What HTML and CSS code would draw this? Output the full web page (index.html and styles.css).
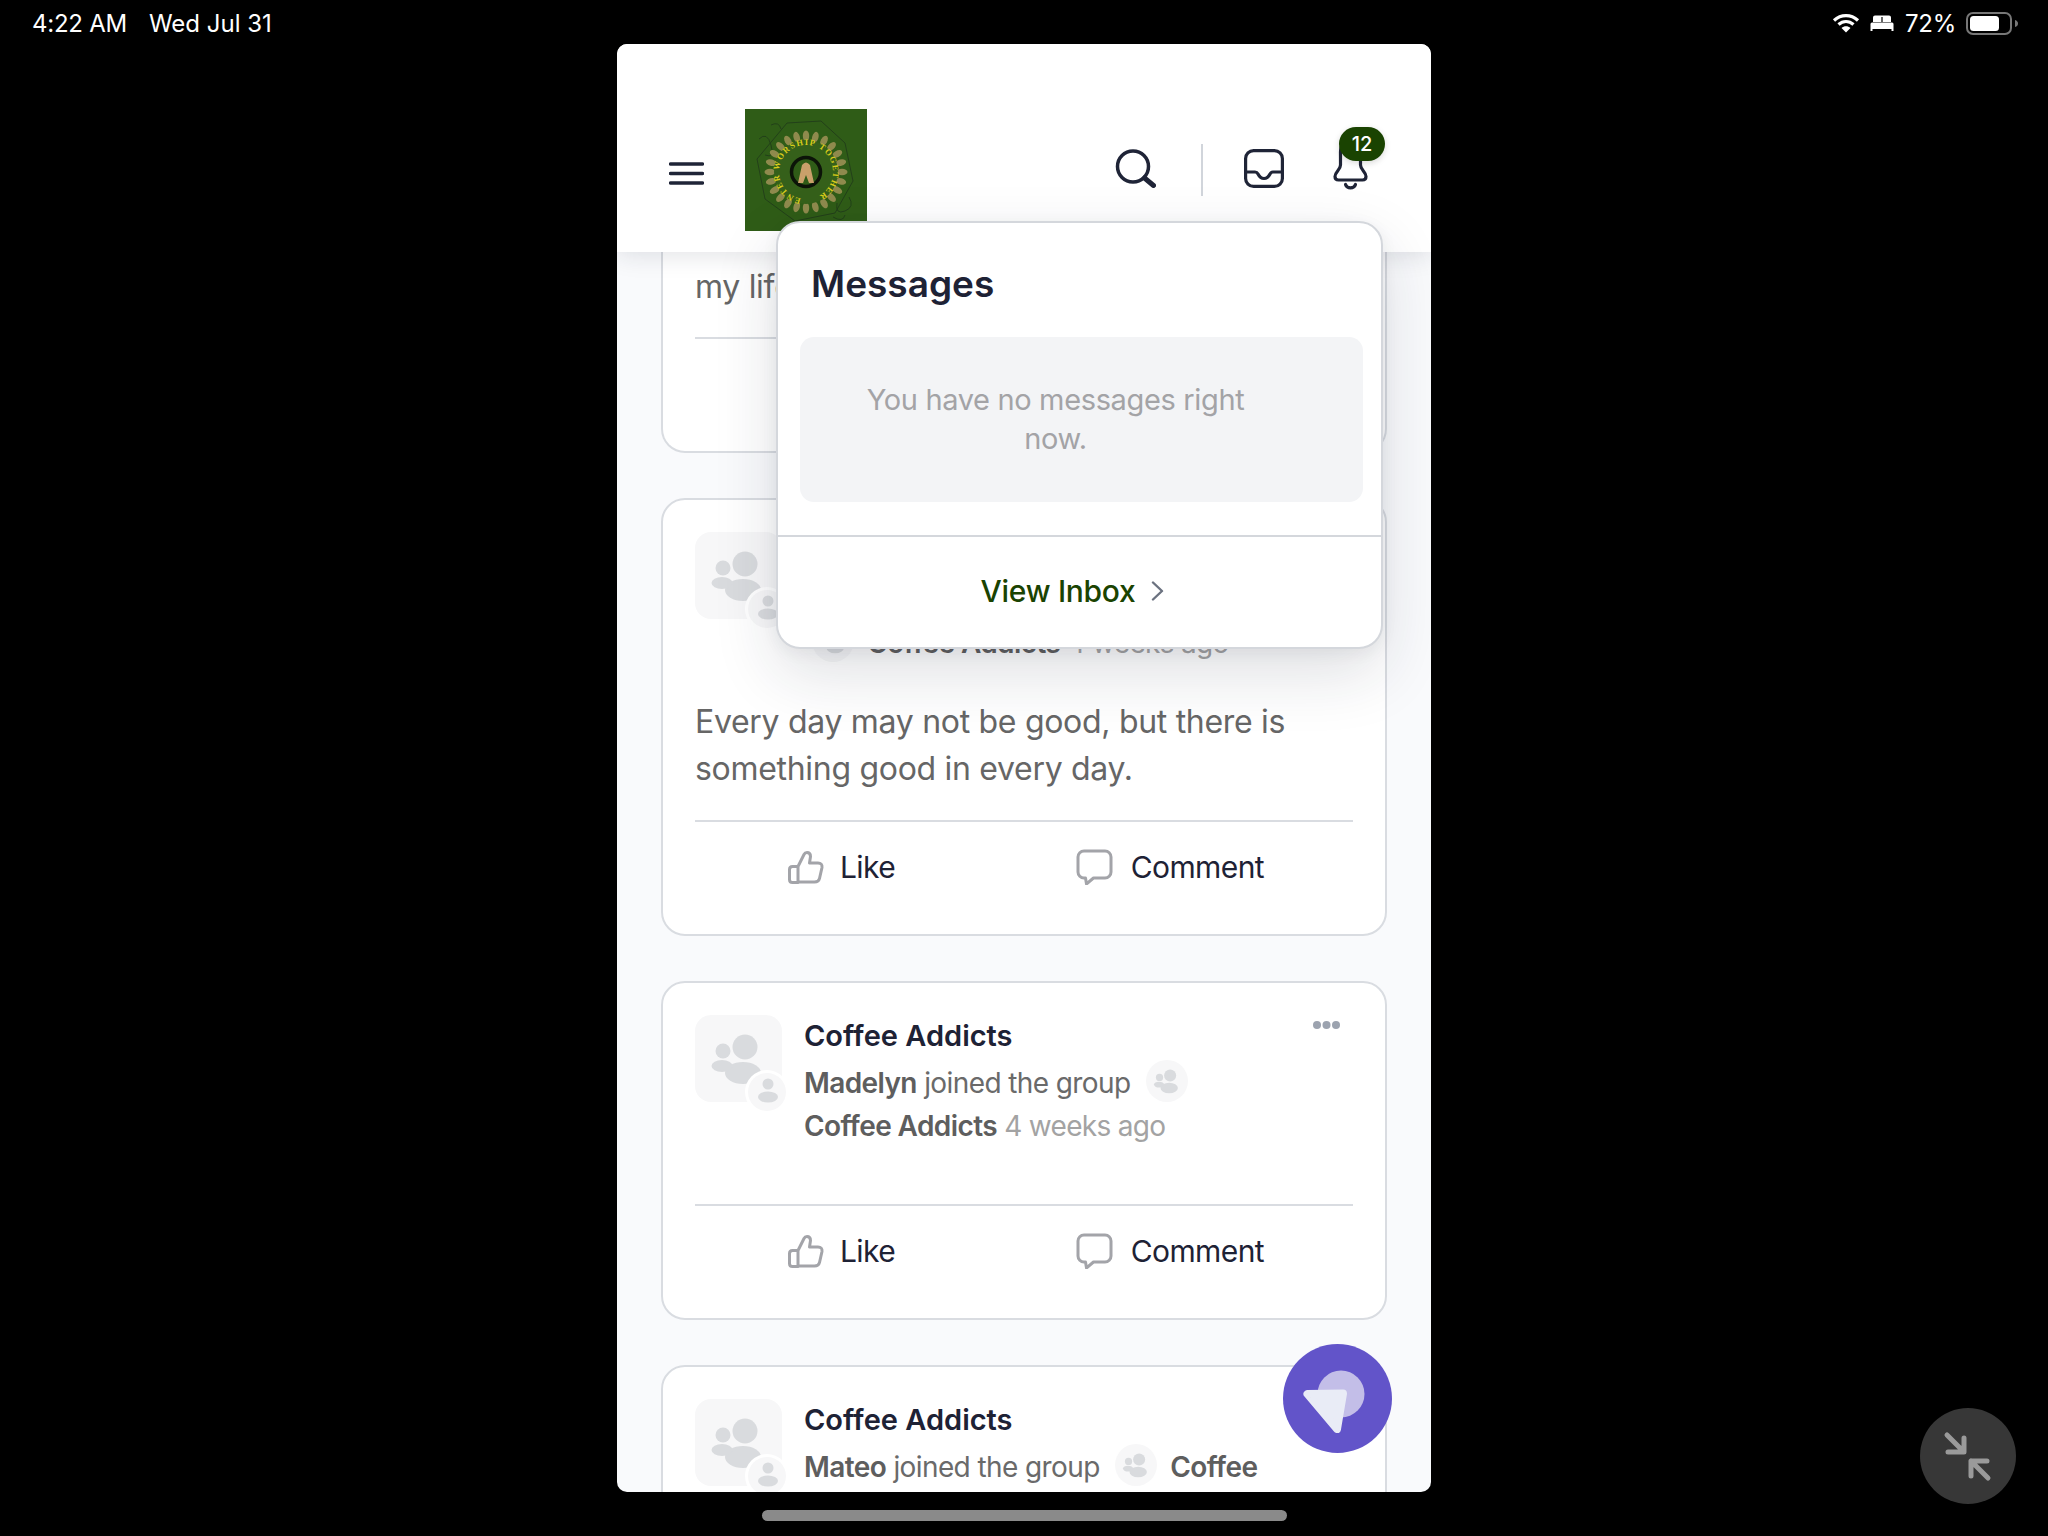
FILE: index.html
```html
<!DOCTYPE html>
<html lang="en">
<head>
<meta charset="utf-8">
<title>Feed</title>
<link rel="stylesheet" href="styles.css">
</head>
<body>
<svg class="sprite" xmlns="http://www.w3.org/2000/svg">
  <symbol id="group" viewBox="0 0 87 87">
    <circle cx="50" cy="32" r="12.5"/><ellipse cx="48" cy="58" rx="18" ry="11"/>
    <circle cx="28" cy="36" r="7.5"/><ellipse cx="27" cy="51" rx="10.5" ry="6"/>
  </symbol>
  <symbol id="person" viewBox="0 0 38 38">
    <circle cx="20" cy="11" r="5.5"/><ellipse cx="20" cy="24" rx="10" ry="5.5"/>
  </symbol>
  <symbol id="thumb" viewBox="0 0 36 33">
    <path d="M10 15.5 16 3.5q1-2 3-2 3.5 0 3.5 4l-1 6.5H30q4.500 0 4 4.500l-2.500 11q-.8 3.500-5 3.500H10zM10 15.500H4.500q-3 0-3 3v10q0 3 3 3H10z"/>
  </symbol>
  <symbol id="bubble" viewBox="0 0 37 36">
    <path d="M8 2H29a6 6 0 0 1 6 6V23a6 6 0 0 1-6 6H17.500L10.500 35 9.500 29H8a6 6 0 0 1-6-6V8a6 6 0 0 1 6-6z"/>
  </symbol>
</svg>

<div class="stage">
  <header class="statusbar">
    <div class="status-left">
      <span class="st-time">4:22 AM</span>
      <span>Wed Jul 31</span>
    </div>
    <div class="status-right">
      <svg class="st-wifi" viewBox="0 0 28 20"><path d="M2 7.500C9 1 19 1 26 7.500M6.500 11.500C11 7.500 17 7.500 21.500 11.500" fill="none" stroke="#fff" stroke-width="3.200"/><path d="M14 19.500 9.500 15C12 12.800 16 12.800 18.500 15z" fill="#fff"/></svg>
      <svg class="st-bed" viewBox="0 0 24 16"><path d="M3 7V2.500Q3 0.500 5 0.500H19Q21 0.500 21 2.500V7zM0.500 9Q0.500 7.500 2 7.500H22Q23.500 7.500 23.500 9V16H21.500V14H2.500V16H0.500z" fill="#fff"/><path d="M12 2V7" stroke="#000" stroke-width="1.200"/></svg>
      <span class="st-pct">72%</span>
      <svg class="st-batt" viewBox="0 0 52 23"><rect x="1" y="1" width="44" height="21" rx="6" fill="none" stroke="#777" stroke-width="2"/><rect x="4" y="4" width="29" height="15" rx="3.500" fill="#fff"/><path d="M49 8v7q3-1 3-3.500T49 8z" fill="#777"/></svg>
    </div>
  </header>

  <div class="frame">
    <div class="topbar">
      <svg class="burger" viewBox="0 0 35 23"><path d="M1.500 2H33.500M1.500 11.500H33.500M1.500 21H33.500" stroke="#1f2437" stroke-width="3.400" stroke-linecap="round"/></svg>
      <svg class="logo" viewBox="0 0 122 122">
        <rect width="122" height="122" fill="#2f5c17"/>
        <path d="M42 14 76 12 100 34 108 72 90 104 50 112 20 90 12 50z" fill="none" stroke="#23401a" stroke-width="1"/>
        <g fill="none" stroke="#23401a" stroke-width="1"><path d="M14 30q8-8 12 6t-6 10M26 16q8-4 10 4M104 88q6 10-4 14t-8-8M88 108q10 6 12-2"/></g>
        <g fill="#8f8a4d">
          <ellipse cx="61" cy="27" rx="3.200" ry="5.500"/><ellipse cx="61" cy="27" rx="3.200" ry="5.500" transform="rotate(15 61 63)"/><ellipse cx="61" cy="27" rx="3.200" ry="5.500" transform="rotate(30 61 63)"/><ellipse cx="61" cy="27" rx="3.200" ry="5.500" transform="rotate(45 61 63)"/><ellipse cx="61" cy="27" rx="3.200" ry="5.500" transform="rotate(60 61 63)"/><ellipse cx="61" cy="27" rx="3.200" ry="5.500" transform="rotate(75 61 63)"/><ellipse cx="61" cy="27" rx="3.200" ry="5.500" transform="rotate(90 61 63)"/><ellipse cx="61" cy="27" rx="3.200" ry="5.500" transform="rotate(105 61 63)"/><ellipse cx="61" cy="27" rx="3.200" ry="5.500" transform="rotate(120 61 63)"/><ellipse cx="61" cy="27" rx="3.200" ry="5.500" transform="rotate(135 61 63)"/><ellipse cx="61" cy="27" rx="3.200" ry="5.500" transform="rotate(150 61 63)"/><ellipse cx="61" cy="27" rx="3.200" ry="5.500" transform="rotate(165 61 63)"/><ellipse cx="61" cy="27" rx="3.200" ry="5.500" transform="rotate(180 61 63)"/><ellipse cx="61" cy="27" rx="3.200" ry="5.500" transform="rotate(195 61 63)"/><ellipse cx="61" cy="27" rx="3.200" ry="5.500" transform="rotate(210 61 63)"/><ellipse cx="61" cy="27" rx="3.200" ry="5.500" transform="rotate(225 61 63)"/><ellipse cx="61" cy="27" rx="3.200" ry="5.500" transform="rotate(240 61 63)"/><ellipse cx="61" cy="27" rx="3.200" ry="5.500" transform="rotate(255 61 63)"/><ellipse cx="61" cy="27" rx="3.200" ry="5.500" transform="rotate(270 61 63)"/><ellipse cx="61" cy="27" rx="3.200" ry="5.500" transform="rotate(285 61 63)"/><ellipse cx="61" cy="27" rx="3.200" ry="5.500" transform="rotate(300 61 63)"/><ellipse cx="61" cy="27" rx="3.200" ry="5.500" transform="rotate(315 61 63)"/><ellipse cx="61" cy="27" rx="3.200" ry="5.500" transform="rotate(330 61 63)"/><ellipse cx="61" cy="27" rx="3.200" ry="5.500" transform="rotate(345 61 63)"/>
        </g>
        <circle cx="61" cy="63" r="32" fill="#35601a"/>
        <path id="logoRing" d="M61 90A27 27 0 1 1 61 36 27 27 0 1 1 61 90" fill="none"/>
        <text class="logo-ring-text"><textPath href="#logoRing" startOffset="5" textLength="150" lengthAdjust="spacing">ENTER WORSHIP TOGETHER</textPath></text>
        <circle cx="61" cy="63" r="14.500" fill="#2f5c17" stroke="#0c1408" stroke-width="3.500"/>
        <path d="M53 74 57 56Q61 51 65 56L69 74H64L61 66 58 74z" fill="#c9a06a"/>
      </svg>
      <div class="actions">
        <svg class="ic-search" viewBox="0 0 41 39"><circle cx="18" cy="17.500" r="15.500" fill="none" stroke="#1f2437" stroke-width="3.500"/><path d="M29.500 29 38.500 36.500" stroke="#1f2437" stroke-width="5" stroke-linecap="round"/></svg>
        <div class="vr"></div>
        <svg class="ic-inbox" viewBox="0 0 40 39"><rect x="1.600" y="1.600" width="36.800" height="35.800" rx="8" fill="none" stroke="#1f2437" stroke-width="3.200"/><path d="M2 23H11q2 0 3 2c1.500 3 4 4.500 6 4.500s4.500-1.500 6-4.500q1-2 3-2H38" fill="none" stroke="#1f2437" stroke-width="3.200"/></svg>
        <div class="bell-wrap">
          <svg class="ic-bell" viewBox="0 0 35 60"><path d="M17.500 10C11 10 7.500 15 7.500 22V35C7.500 40 2 42 2 46.500 2 49 3.500 50 5.500 50H29.500C31.500 50 33 49 33 46.500 33 42 27.500 40 27.500 35V22C27.500 15 24 10 17.500 10zM12.500 54.500C14 59 21 59 22.500 54.500" fill="none" stroke="#1f2437" stroke-width="3.200" stroke-linecap="round"/></svg>
          <span class="bell-badge">12</span>
        </div>
      </div>
    </div>

    <main class="feed">
      <article class="card card-cut">
        <p class="post-text">my life is better with a good cup of coffee.</p>
        <div class="rule"></div>
        <div class="react">
          <span class="react-btn"><svg class="ic-like"><use href="#thumb"/></svg>Like</span>
          <span class="react-btn"><svg class="ic-comment"><use href="#bubble"/></svg>Comment</span>
        </div>
      </article>

      <article class="card">
        <div class="head">
          <div class="avatar"><svg class="avatar-art"><use href="#group"/></svg><span class="avatar-badge"><svg class="badge-art"><use href="#person"/></svg></span></div>
          <div class="meta">
            <div class="meta-title">Coffee Addicts</div>
            <div class="meta-line"><b>Amelia</b> joined the group<br><span class="mini"><svg class="mini-art"><use href="#group"/></svg></span> <b>Coffee Addicts</b> <i>4 weeks ago</i></div>
          </div>
          <svg class="dots" viewBox="0 0 27 10"><circle cx="4" cy="5" r="4"/><circle cx="13.500" cy="5" r="4"/><circle cx="23" cy="5" r="4"/></svg>
        </div>
        <p class="post-text">Every day may not be good, but there is something good in every day.</p>
        <div class="rule"></div>
        <div class="react">
          <span class="react-btn"><svg class="ic-like"><use href="#thumb"/></svg>Like</span>
          <span class="react-btn"><svg class="ic-comment"><use href="#bubble"/></svg>Comment</span>
        </div>
      </article>

      <article class="card">
        <div class="head head-plain">
          <div class="avatar"><svg class="avatar-art"><use href="#group"/></svg><span class="avatar-badge"><svg class="badge-art"><use href="#person"/></svg></span></div>
          <div class="meta">
            <div class="meta-title">Coffee Addicts</div>
            <div class="meta-line"><b>Madelyn</b> joined the group <span class="mini"><svg class="mini-art"><use href="#group"/></svg></span> <b>Coffee Addicts</b> <i>4 weeks ago</i></div>
          </div>
          <svg class="dots" viewBox="0 0 27 10"><circle cx="4" cy="5" r="4"/><circle cx="13.500" cy="5" r="4"/><circle cx="23" cy="5" r="4"/></svg>
        </div>
        <div class="rule"></div>
        <div class="react">
          <span class="react-btn"><svg class="ic-like"><use href="#thumb"/></svg>Like</span>
          <span class="react-btn"><svg class="ic-comment"><use href="#bubble"/></svg>Comment</span>
        </div>
      </article>

      <article class="card">
        <div class="head head-plain">
          <div class="avatar"><svg class="avatar-art"><use href="#group"/></svg><span class="avatar-badge"><svg class="badge-art"><use href="#person"/></svg></span></div>
          <div class="meta">
            <div class="meta-title">Coffee Addicts</div>
            <div class="meta-line"><b>Mateo</b> joined the group <span class="mini"><svg class="mini-art"><use href="#group"/></svg></span> <b>Coffee Addicts</b> <i>4 weeks ago</i></div>
          </div>
          <svg class="dots" viewBox="0 0 27 10"><circle cx="4" cy="5" r="4"/><circle cx="13.500" cy="5" r="4"/><circle cx="23" cy="5" r="4"/></svg>
        </div>
      </article>
    </main>

    <section class="popup">
      <div class="popup-body">
        <h2 class="popup-title">Messages</h2>
        <div class="empty"><p class="empty-text">You have no messages right now.</p></div>
      </div>
      <div class="popup-foot">
        <span class="inbox-link">View Inbox</span>
        <svg class="chev" viewBox="0 0 13 20"><path d="M2 1.500 11 10 2 18.500" fill="none" stroke="#6b7280" stroke-width="2.400" stroke-linecap="round" stroke-linejoin="round"/></svg>
      </div>
    </section>

    <button class="fab" type="button" aria-label="Open">
      <svg class="fab-art" viewBox="0 0 109 109"><circle cx="58" cy="50" r="23.500" fill="#c3bee8"/><path d="M24.500 50 60 49.500 54 85z" fill="#e9ecf6" stroke="#e9ecf6" stroke-width="8" stroke-linejoin="round"/></svg>
    </button>
  </div>

  <div class="homebar"></div>

  <button class="exit" type="button" aria-label="Exit full screen">
    <svg class="exit-art" viewBox="0 0 96 96"><path d="M27 27 43 43M28 44H44V30M68 70 51 53M51 68V53H67" fill="none" stroke="#9a9a9a" stroke-width="5" stroke-linecap="round" stroke-linejoin="round"/></svg>
  </button>
</div>
</body>
</html>
```

FILE: styles.css
```css
* { box-sizing: border-box; }
html, body { margin: 0; padding: 0; background: #000; }
body { font-family: Inter, "Noto Sans", sans-serif; width: 2048px; height: 1536px; overflow: hidden; }
.sprite { display: none; }

.stage { position: relative; width: 2048px; height: 1536px; display: flex; flex-direction: column; align-items: center; }

/* status bar */
.statusbar { width: 100%; height: 44px; flex: none; display: flex; justify-content: space-between; align-items: center; padding: 2px 30px 0 32px; color: #fff; font-size: 24px; }
.status-left { display: flex; gap: 22px; }
.st-time { letter-spacing: -.25px; }
.status-right { display: flex; align-items: center; }
.st-wifi { width: 28px; height: 20px; margin-right: 10px; margin-left: 2px; }
.st-bed { width: 24px; height: 16px; margin-right: 11px; }
.st-pct { margin-right: 10px; letter-spacing: -.25px; }
.st-batt { width: 52px; height: 23px; }

/* frame */
.frame { position: relative; width: 814px; height: 1448px; flex: none; background: #f9fafc; border-radius: 10px; overflow: hidden; display: flex; flex-direction: column; }

.topbar { position: relative; z-index: 2; flex: none; height: 208px; background: #fff; padding: 65px 63px 21px 52px; display: flex; align-items: center; box-shadow: 0 2px 24px rgba(31, 36, 55, .14); }
.burger { width: 35px; height: 23px; margin-top: 7px; margin-right: 41px; flex: none; }
.logo { width: 122px; height: 122px; flex: none; }
.logo-ring-text { font-family: "Liberation Serif", serif; font-weight: 700; font-size: 8.500px; fill: #d9cc1a; }
.actions { margin-left: auto; display: flex; align-items: center; }
.ic-search { width: 41px; height: 39px; margin: 0 45px 3px 0; }
.vr { width: 2px; height: 52px; background: #d1d5db; margin-right: 41px; }
.ic-inbox { width: 40px; height: 39px; margin: 0 49px 3px 0; }
.bell-wrap { position: relative; width: 35px; height: 60px; margin-bottom: 20px; }
.ic-bell { width: 35px; height: 60px; display: block; }
.bell-badge { position: absolute; left: 6px; top: -3px; width: 46px; height: 34px; border-radius: 17px; background: #1a4301; color: #fff; font-size: 20px; font-weight: 500; line-height: 34px; text-align: center; box-shadow: 0 2px 6px rgba(0, 0, 0, .15); }

/* feed */
.feed { flex: 1; min-height: 0; overflow: hidden; padding: 0 44px; display: flex; flex-direction: column; gap: 45px; }
.card { flex: none; background: #fff; border: 2px solid #d9dce1; border-radius: 24px; padding: 32px 32px 0; }
.card-cut { border-top: 0; border-radius: 0 0 24px 24px; padding-top: 11px; }
.card-cut .post-text { margin-bottom: 27px; }
.head { display: flex; margin-bottom: 33px; }
.head-plain { margin-bottom: 56px; }
.avatar { position: relative; width: 87px; height: 87px; flex: none; background: #f7f7f8; border-radius: 16px; margin-right: 22px; }
.avatar-art { display: block; width: 87px; height: 87px; fill: #d9dbde; }
.avatar-badge { position: absolute; right: -7px; bottom: -12px; width: 44px; height: 44px; padding: 3px; border-radius: 50%; background: #fff; }
.badge-art { display: block; width: 38px; height: 38px; border-radius: 50%; background: #f7f7f8; fill: #d9dbde; }
.meta { flex: none; width: 466px; margin-top: 1px; }
.meta-title { font-size: 29px; font-weight: 600; line-height: 40px; margin-bottom: 4px; color: #1e2235; }
.meta-line { font-size: 28px; line-height: 43px; letter-spacing: -.6px; color: #6a6a6a; }
.meta-line b { font-weight: 600; color: #5e5e5e; }
.meta-line i { font-style: normal; letter-spacing: -.7px; color: #a3a3a3; }
.mini { display: inline-block; width: 42px; height: 42px; margin: 0 6px 0 8px; border-radius: 50%; background: #f7f7f8; vertical-align: -9px; }
.mini-art { display: block; width: 42px; height: 42px; fill: #d9dbde; }
.dots { flex: none; width: 27px; height: 10px; margin: 5px 13px 0 auto; fill: #9ca3af; }
.post-text { margin: 0 0 28px; font-size: 32px; line-height: 47px; letter-spacing: -.3px; color: #666; }
.rule { height: 2px; background: #d9dce1; }
.react { height: 112px; padding: 0 89px 22px 93px; display: flex; justify-content: space-between; align-items: center; }
.react-btn { display: flex; align-items: center; font-size: 30px; letter-spacing: -.6px; color: #1e2235; }
.ic-like { width: 36px; height: 33px; margin-right: 16px; fill: none; stroke: #a3a4a9; stroke-width: 3; stroke-linejoin: round; }
.ic-comment { width: 37px; height: 36px; margin-right: 18px; fill: none; stroke: #a3a4a9; stroke-width: 3; stroke-linejoin: round; }

/* popup */
.popup { position: absolute; z-index: 3; left: 159px; top: 177px; width: 607px; height: 428px; background: #fff; border: 2px solid #d4d7dc; border-radius: 24px; box-shadow: 0 24px 64px rgba(31, 36, 55, .14), 0 4px 16px rgba(31, 36, 55, .06); display: flex; flex-direction: column; }
.popup-body { padding: 39px 18px 33px 22px; }
.popup-title { margin: 0 0 31px 11px; font-size: 37px; font-weight: 600; line-height: 44px; color: #1e2235; }
.empty { height: 165px; padding: 43px 100px 0 48px; background: #f3f4f6; border-radius: 14px; }
.empty-text { margin: 0; font-size: 29px; line-height: 39px; letter-spacing: -.35px; color: #a3a3a6; text-align: center; }
.popup-foot { flex: 1; border-top: 2px solid #d4d7dc; display: flex; justify-content: center; align-items: center; padding: 0 14px 2px 0; }
.inbox-link { font-size: 30px; font-weight: 500; letter-spacing: -.3px; color: #1a4301; margin-right: 16px; }
.chev { width: 13px; height: 20px; }

/* floating */
.fab { position: absolute; z-index: 4; right: 39px; bottom: 39px; width: 109px; height: 109px; padding: 0; border: 0; border-radius: 50%; background: #6254c9; }
.fab-art { display: block; width: 109px; height: 109px; }
.homebar { width: 525px; height: 11px; flex: none; margin-top: 18px; border-radius: 6px; background: #8a8a8a; }
.exit { position: absolute; left: 1920px; top: 1408px; width: 96px; height: 96px; padding: 0; border: 0; border-radius: 50%; background: #373737; }
.exit-art { display: block; width: 96px; height: 96px; }
```
